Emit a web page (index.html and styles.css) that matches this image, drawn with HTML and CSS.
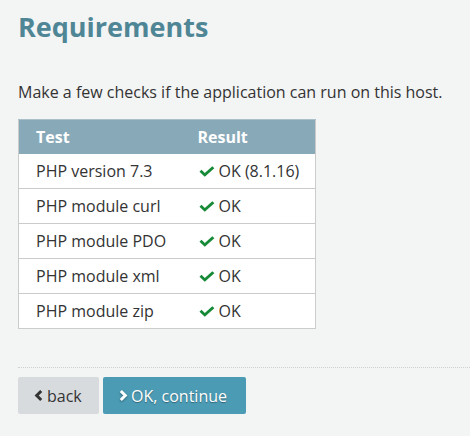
FILE: index.html
```html
<!DOCTYPE html>
<html>
<head>
<meta charset="utf-8">
<link rel="stylesheet" href="styles.css">
</head>
<body>
<div class="page">
  <h1 class="title">Requirements</h1>
  <p class="intro">Make a few checks if the application can run on this host.</p>
  <table class="checks">
    <colgroup><col class="col-test"><col class="col-result"></colgroup>
    <thead>
      <tr><th>Test</th><th>Result</th></tr>
    </thead>
    <tbody>
      <tr><td>PHP version 7.3</td><td><span class="ok"><svg class="check" viewBox="0 0 18 12"><path d="M0.8 6.4 L3 4.2 L6.6 7.6 L14.8 0.2 L17 2.4 L6.6 11.6 Z" fill="#168a36"/></svg>OK (8.1.16)</span></td></tr>
      <tr><td>PHP module curl</td><td><span class="ok"><svg class="check" viewBox="0 0 18 12"><path d="M0.8 6.4 L3 4.2 L6.6 7.6 L14.8 0.2 L17 2.4 L6.6 11.6 Z" fill="#168a36"/></svg>OK</span></td></tr>
      <tr><td>PHP module PDO</td><td><span class="ok"><svg class="check" viewBox="0 0 18 12"><path d="M0.8 6.4 L3 4.2 L6.6 7.6 L14.8 0.2 L17 2.4 L6.6 11.6 Z" fill="#168a36"/></svg>OK</span></td></tr>
      <tr><td>PHP module xml</td><td><span class="ok"><svg class="check" viewBox="0 0 18 12"><path d="M0.8 6.4 L3 4.2 L6.6 7.6 L14.8 0.2 L17 2.4 L6.6 11.6 Z" fill="#168a36"/></svg>OK</span></td></tr>
      <tr><td>PHP module zip</td><td><span class="ok"><svg class="check" viewBox="0 0 18 12"><path d="M0.8 6.4 L3 4.2 L6.6 7.6 L14.8 0.2 L17 2.4 L6.6 11.6 Z" fill="#168a36"/></svg>OK</span></td></tr>
    </tbody>
  </table>
  <div class="separator"></div>
  <div class="actions">
    <button class="btn btn-back"><svg class="chev" viewBox="0 0 9 11"><path d="M7.2 1 L2.7 5.5 L7.2 10" fill="none" stroke="currentColor" stroke-width="3"/></svg>back</button>
    <button class="btn btn-next"><svg class="chev" viewBox="0 0 9 11"><path d="M1.8 1 L6.3 5.5 L1.8 10" fill="none" stroke="currentColor" stroke-width="3"/></svg>OK, continue</button>
  </div>
</div>
</body>
</html>
```

FILE: styles.css
```css
html, body {
  margin: 0;
  padding: 0;
  background: #f3f4f4;
}
body {
  font-family: "Open Sans", "Liberation Sans", sans-serif;
  color: #333;
  font-size: 16px;
}
.page {
  padding: 9px 0 0 18px;
}
.title {
  margin: 0;
  font-size: 27px;
  font-weight: 700;
  color: #4f8696;
  line-height: 36px;
}
.intro {
  margin: 36px 0 0 0;
  line-height: 22px;
}
.checks {
  margin-top: 16px;
  width: 298px;
  table-layout: fixed;
  border-collapse: collapse;
  border: 1px solid #cbcbcb;
  background: #fff;
}
.col-test {
  width: 162px;
}
.checks th {
  background: #88a9b8;
  color: #fff;
  font-weight: 700;
  text-align: left;
  height: 34px;
  padding: 0 0 0 17px;
  border-top: 1px solid #a9bfc9;
}
.checks td {
  height: 34px;
  padding: 0 0 0 17px;
  border-bottom: 1px solid #cbcbcb;
  white-space: nowrap;
}
.ok {
  display: inline-flex;
  align-items: center;
}
.check {
  width: 18px;
  height: 11px;
  margin-right: 3px;
  flex: none;
}
.separator {
  margin-top: 38px;
  border-top: 1px dotted #cfd0d0;
}
.actions {
  display: flex;
  gap: 4px;
  margin-top: 9px;
}
.btn {
  font-family: inherit;
  font-size: 16px;
  height: 37px;
  border: none;
  border-radius: 2px;
  display: inline-flex;
  align-items: center;
  padding: 0 0 0 16px;
}
.chev {
  width: 9px;
  height: 11px;
  margin-right: 4px;
  flex: none;
  overflow: visible;
}
.btn-back {
  background: #d8dbde;
  color: #333;
  width: 81px;
}
.btn-next {
  background: #4c9bb4;
  color: #fff;
  width: 143px;
  text-shadow: 0 1px 1px rgba(0,0,0,0.35);
}
.btn-next .chev {
  margin-right: 3px;
  filter: drop-shadow(0 1px 1px rgba(0,0,0,0.35));
}
```
